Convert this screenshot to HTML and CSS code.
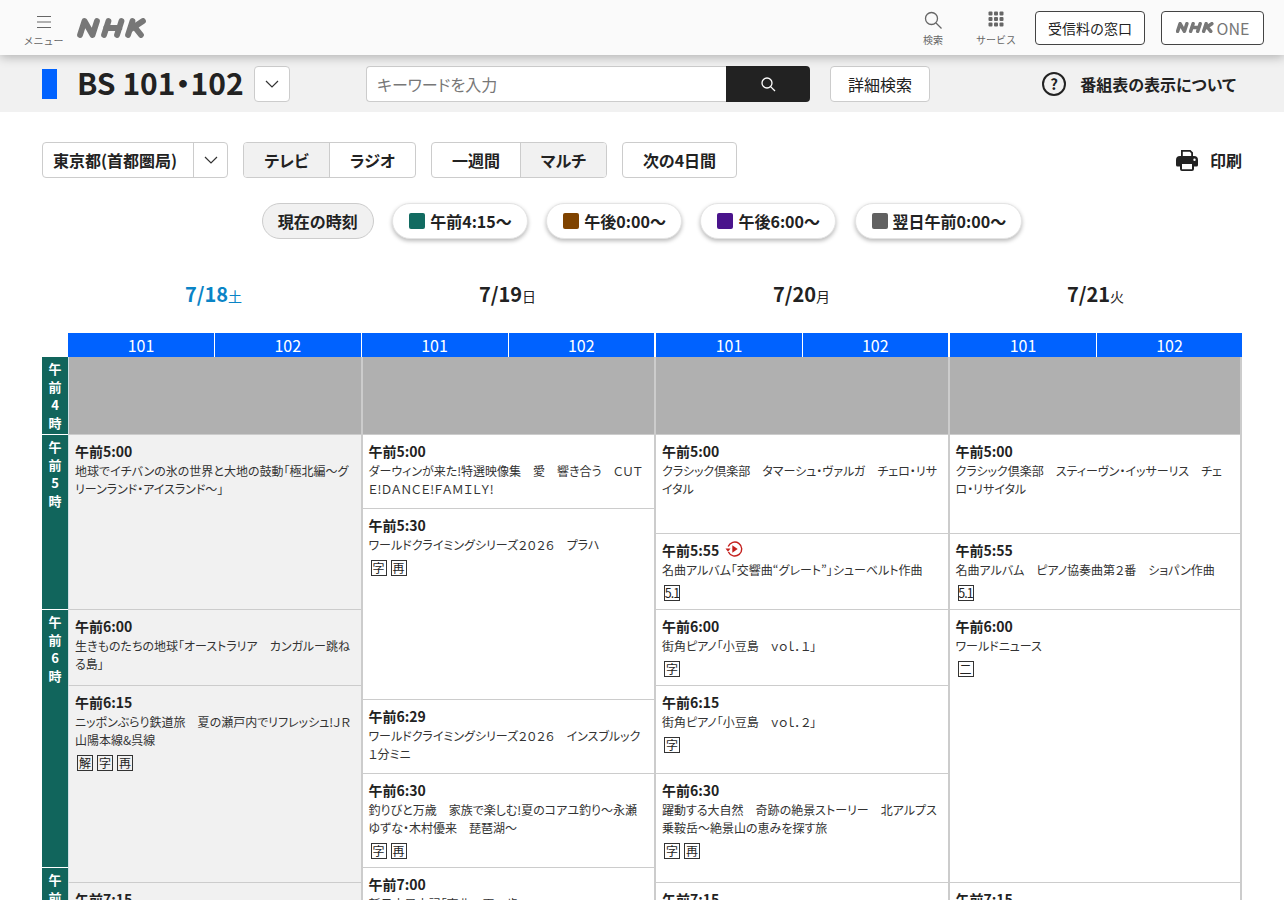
FILE: index.html
```html
<!DOCTYPE html>
<html lang="ja">
<head>
<meta charset="utf-8">
<title>番組表</title>
<link rel="stylesheet" href="styles.css">
</head>
<body>
<header class="top">
  <div class="menu">
    <svg class="menu-icon" viewBox="0 0 16 14" width="16" height="14"><path d="M1 1.5h14M1 7h14M1 12.5h14" stroke="#666" stroke-width="1.2" fill="none"/></svg>
    <span class="top-label">メニュー</span>
  </div>
  <svg class="logo" viewBox="0 0 70 20" width="70" height="20" role="img" aria-label="NHK">
    <path d="M3 17L7.5 3L15.5 17L20 3M27 17L31.500 3M40 17L44.500 3M29 10H42.500M51 17L55.500 3M66 3L54 11M58 9.500L64 17" fill="none" stroke="#777" stroke-width="5.800" stroke-linecap="round" stroke-linejoin="round"/>
  </svg>
  <div class="top-right">
    <div class="top-item item-search">
      <svg viewBox="0 0 20 20" width="20" height="20"><circle cx="8.500" cy="8.500" r="6" fill="none" stroke="#666" stroke-width="1.300"/><path d="M13 13l5.500 5.500" stroke="#666" stroke-width="1.300"/></svg>
      <span class="top-label">検索</span>
    </div>
    <div class="top-item item-service">
      <svg viewBox="0 0 16 16" width="16" height="16" fill="#666"><rect x="0.500" y="0.500" width="4" height="4" rx="1"/><rect x="6" y="0.500" width="4" height="4" rx="1"/><rect x="11.500" y="0.500" width="4" height="4" rx="1"/><rect x="0.500" y="6" width="4" height="4" rx="1"/><rect x="6" y="6" width="4" height="4" rx="1"/><rect x="11.500" y="6" width="4" height="4" rx="1"/><rect x="0.500" y="11.500" width="4" height="4" rx="1"/><rect x="6" y="11.500" width="4" height="4" rx="1"/><rect x="11.500" y="11.500" width="4" height="4" rx="1"/></svg>
      <span class="top-label">サービス</span>
    </div>
    <a class="top-btn btn-fee">受信料の窓口</a>
    <a class="top-btn btn-one">
      <svg viewBox="0 0 70 20" width="38" height="11" role="img" aria-label="NHK"><path d="M3 17L7.500 3L15.500 17L20 3M27 17L31.500 3M40 17L44.500 3M29 10H42.500M51 17L55.500 3M66 3L54 11M58 9.500L64 17" fill="none" stroke="#777" stroke-width="6.500" stroke-linecap="round" stroke-linejoin="round"/></svg>
      <span>ONE</span>
    </a>
  </div>
</header>

<section class="subbar">
  <span class="marker"></span>
  <h1 class="title">BS 101・102</h1>
  <button class="chev-btn"><svg class="chev" viewBox="0 0 14 8" width="14" height="8"><path d="M1 1l6 6 6-6"/></svg></button>
  <div class="search">
    <span class="search-input">キーワードを入力</span>
    <span class="search-go"><svg viewBox="0 0 16 16" width="16" height="16"><circle cx="7" cy="7" r="5" fill="none" stroke="#fff" stroke-width="1.300"/><path d="M10.600 10.600L15 15" stroke="#fff" stroke-width="1.300"/></svg></span>
  </div>
  <span class="adv">詳細検索</span>
  <div class="help">
    <svg viewBox="0 0 24 24" width="24" height="24"><circle cx="12" cy="12" r="11" fill="none" stroke="#222" stroke-width="2"/><text x="12" y="17.500" text-anchor="middle" class="help-q">?</text></svg>
    <span>番組表の表示について</span>
  </div>
</section>

<section class="controls">
  <div class="seg seg-region">
    <span class="region">東京都(首都圏局)</span>
    <span class="region-chev"><svg class="chev" viewBox="0 0 14 8" width="14" height="8"><path d="M1 1l6 6 6-6"/></svg></span>
  </div>
  <div class="seg seg-media">
    <span class="seg-item on">テレビ</span>
    <span class="seg-item">ラジオ</span>
  </div>
  <div class="seg seg-range">
    <span class="seg-item w88">一週間</span>
    <span class="seg-item on">マルチ</span>
  </div>
  <div class="seg seg-next"><span class="seg-item">次の4日間</span></div>
  <div class="print">
    <svg viewBox="0 0 22 21" width="22" height="21"><path fill="#222" d="M5 0h9.500L17 2.500V7H5zM6.800 1.800V7h8.400V3.300L13.800 1.800z"/><path fill="#222" fill-rule="evenodd" d="M4 6h14a4 4 0 0 1 4 4v5a1.500 1.500 0 0 1-1.500 1.500H18v2.500a2 2 0 0 1-2 2H6a2 2 0 0 1-2-2v-2.500H1.500A1.500 1.500 0 0 1 0 15v-5a4 4 0 0 1 4-4zm2 8v5.200h10V14zm12.500-5.500a1.200 1.200 0 1 0 0 2.400 1.200 1.200 0 0 0 0-2.400z"/></svg>
    <span>印刷</span>
  </div>
</section>

<nav class="pills">
  <span class="pill now">現在の時刻</span>
  <span class="pill"><i class="sw teal"></i>午前4:15〜</span>
  <span class="pill"><i class="sw brown"></i>午後0:00〜</span>
  <span class="pill"><i class="sw purple"></i>午後6:00〜</span>
  <span class="pill"><i class="sw grey"></i>翌日午前0:00〜</span>
</nav>

<div class="dates">
  <div class="date today">7/18<small>土</small></div>
  <div class="date">7/19<small>日</small></div>
  <div class="date">7/20<small>月</small></div>
  <div class="date">7/21<small>火</small></div>
</div>

<main class="grid">
  <div class="chs d1"><span>101</span><span>102</span></div>
  <div class="chs d2"><span>101</span><span>102</span></div>
  <div class="chs d3"><span>101</span><span>102</span></div>
  <div class="chs d4 last"><span>101</span><span>102</span></div>

  <div class="hour h4">午<br>前<br>4<br>時</div>
  <div class="hour h5">午<br>前<br>5<br>時</div>
  <div class="hour h6">午<br>前<br>6<br>時</div>
  <div class="hour h7">午<br>前<br>7<br>時</div>

  <div class="none d1 f400 t500"></div>
  <div class="none d2 f400 t500"></div>
  <div class="none d3 f400 t500"></div>
  <div class="none d4 f400 t500"></div>

  <article class="prog past d1 f500 t600">
    <div class="time">午前5:00</div>
    <p>地球でイチバンの氷の世界と大地の鼓動「極北編〜グリーンランド・アイスランド〜」</p>
  </article>
  <article class="prog past d1 f600 t615">
    <div class="time">午前6:00</div>
    <p>生きものたちの地球「オーストラリア　カンガルー跳ねる島」</p>
  </article>
  <article class="prog past d1 f615 t715">
    <div class="time">午前6:15</div>
    <p>ニッポンぶらり鉄道旅　夏の瀬戸内でリフレッシュ!ＪＲ山陽本線&amp;呉線</p>
    <div class="marks"><b>解</b><b>字</b><b>再</b></div>
  </article>
  <article class="prog past d1 f715 tend">
    <div class="time">午前7:15</div>
  </article>

  <article class="prog d2 f500 t530">
    <div class="time">午前5:00</div>
    <p>ダーウィンが来た!特選映像集　愛　響き合う　ＣＵＴＥ!ＤＡＮＣＥ!ＦＡＭＩＬＹ!</p>
  </article>
  <article class="prog d2 f530 t629">
    <div class="time">午前5:30</div>
    <p>ワールドクライミングシリーズ２０２６　プラハ</p>
    <div class="marks"><b>字</b><b>再</b></div>
  </article>
  <article class="prog d2 f629 t630">
    <div class="time">午前6:29</div>
    <p>ワールドクライミングシリーズ２０２６　インスブルック　１分ミニ</p>
  </article>
  <article class="prog d2 f630 t700">
    <div class="time">午前6:30</div>
    <p>釣りびと万歳　家族で楽しむ!夏のコアユ釣り〜永瀬ゆずな・木村優来　琵琶湖〜</p>
    <div class="marks"><b>字</b><b>再</b></div>
  </article>
  <article class="prog d2 f700 tend">
    <div class="time">午前7:00</div>
    <p>新日本風土記「東北　再一歩」</p>
  </article>

  <article class="prog d3 f500 t555">
    <div class="time">午前5:00</div>
    <p>クラシック倶楽部　タマーシュ・ヴァルガ　チェロ・リサイタル</p>
  </article>
  <article class="prog d3 f555 t600">
    <div class="time">午前5:55
      <svg class="replay" viewBox="0 0 18 18" width="18" height="18"><path d="M3.200 6.500A7 7 0 1 1 3.400 12" fill="none" stroke="#c4201d" stroke-width="1.400"/><path d="M0.500 8.500h5L3 11.800z" fill="#c4201d"/><path d="M7.300 5.300l5.400 3.700-5.400 3.700z" fill="#c4201d"/></svg>
    </div>
    <p>名曲アルバム「交響曲“グレート”」シューベルト作曲</p>
    <div class="marks"><b class="tight">5.1</b></div>
  </article>
  <article class="prog d3 f600 t615">
    <div class="time">午前6:00</div>
    <p>街角ピアノ「小豆島　ｖｏｌ．１」</p>
    <div class="marks"><b>字</b></div>
  </article>
  <article class="prog d3 f615 t630">
    <div class="time">午前6:15</div>
    <p>街角ピアノ「小豆島　ｖｏｌ．２」</p>
    <div class="marks"><b>字</b></div>
  </article>
  <article class="prog d3 f630 t715">
    <div class="time">午前6:30</div>
    <p>躍動する大自然　奇跡の絶景ストーリー　北アルプス乗鞍岳〜絶景山の恵みを探す旅</p>
    <div class="marks"><b>字</b><b>再</b></div>
  </article>
  <article class="prog d3 f715 tend">
    <div class="time">午前7:15</div>
  </article>

  <article class="prog d4 f500 t555">
    <div class="time">午前5:00</div>
    <p>クラシック倶楽部　スティーヴン・イッサーリス　チェロ・リサイタル</p>
  </article>
  <article class="prog d4 f555 t600">
    <div class="time">午前5:55</div>
    <p>名曲アルバム　ピアノ協奏曲第２番　ショパン作曲</p>
    <div class="marks"><b class="tight">5.1</b></div>
  </article>
  <article class="prog d4 f600 t715">
    <div class="time">午前6:00</div>
    <p>ワールドニュース</p>
    <div class="marks"><b>二</b></div>
  </article>
  <article class="prog d4 f715 tend">
    <div class="time">午前7:15</div>
  </article>
</main>
</body>
</html>
```

FILE: styles.css
```css
* { box-sizing: border-box; }
html, body { margin: 0; padding: 0; height: 900px; overflow: hidden; }
body {
  font-family: "Noto Sans CJK JP", "Noto Sans", sans-serif;
  font-feature-settings: "palt";
  color: #222;
  background: #fff;
}

/* top bar */
.top {
  position: relative;
  z-index: 2;
  height: 55px;
  display: flex;
  align-items: center;
  padding: 0 20px 0 24px;
  background: #fafafa;
  box-shadow: 0 2px 10px rgba(0, 0, 0, .28);
}
.menu, .top-item {
  display: flex;
  flex-direction: column;
  align-items: center;
  color: #666;
}
.menu { width: 39px; padding-top: 6px; }
.menu-icon { margin-bottom: 5px; }
.top-label { font-size: 10px; line-height: 13px; white-space: nowrap; }
.menu .top-label, .item-service .top-label { font-feature-settings: normal; }
.logo { margin-left: 14px; }
.top-right { margin-left: auto; display: flex; align-items: center; }
.item-search { width: 20px; }
.item-search svg { margin-bottom: 3px; }
.item-service { width: 40px; margin-left: 33px; margin-right: 19px; padding-top: 1px; }
.item-service svg { margin-bottom: 6px; }
.top-btn {
  height: 34px;
  display: flex;
  align-items: center;
  justify-content: center;
  border: 1px solid #444;
  border-radius: 4px;
  background: #fff;
  font-size: 14px;
  font-feature-settings: normal;
}
.btn-fee { width: 110px; }
.btn-one { width: 103px; margin-left: 16px; gap: 3px; color: #777; font-size: 16px; }

/* sub bar */
.subbar {
  height: 57px;
  display: flex;
  align-items: center;
  padding: 0 48px 0 42px;
  background: #f1f1f1;
}
.marker { width: 15px; height: 30px; background: #0062ff; }
.title { margin: 0 0 4px 20px; font-size: 30px; font-weight: 700; line-height: 36px; white-space: nowrap; width: 167px; }
.chev-btn {
  width: 36px;
  height: 36px;
  margin-left: 10px;
  padding: 0;
  display: flex;
  align-items: center;
  justify-content: center;
  background: #fff;
  border: 1px solid #ccc;
  border-radius: 4px;
}
.chev { fill: none; stroke: #333; stroke-width: 1.200; }
.search { display: flex; margin-left: 76px; height: 36px; }
.search-input {
  width: 360px;
  padding-left: 10px;
  display: flex;
  align-items: center;
  background: #fff;
  border: 1px solid #ccc;
  border-right: 0;
  border-radius: 4px 0 0 4px;
  color: #777;
  font-size: 16px;
}
.search-go {
  width: 84px;
  display: flex;
  align-items: center;
  justify-content: center;
  background: #222;
  border-radius: 0 4px 4px 0;
}
.adv {
  width: 100px;
  height: 36px;
  margin-left: 20px;
  display: flex;
  align-items: center;
  justify-content: center;
  background: #fff;
  border: 1px solid #ccc;
  border-radius: 4px;
  font-size: 16px;
}
.help { margin-left: auto; display: flex; align-items: center; gap: 14px; font-size: 16px; font-weight: 700; }
.help-q { font-size: 15px; font-weight: 700; fill: #222; }

/* controls */
.controls {
  display: flex;
  align-items: center;
  height: 36px;
  margin: 30px 42px 0;
}
.seg {
  display: flex;
  height: 36px;
  border: 1px solid #ccc;
  border-radius: 4px;
  overflow: hidden;
  font-size: 16px;
  font-weight: 700;
}
.seg-region { width: 186px; }
.region { width: 151px; padding-left: 10px; display: flex; align-items: center; border-right: 1px solid #ccc; white-space: nowrap; }
.region-chev { flex: 1; display: flex; align-items: center; justify-content: center; }
.seg-media { width: 173px; margin-left: 15px; }
.seg-range { width: 176px; margin-left: 15px; }
.seg-next { width: 115px; margin-left: 15px; }
.seg-item { flex: 1; display: flex; align-items: center; justify-content: center; }
.seg-item + .seg-item { border-left: 1px solid #ccc; }
.seg-item.w88 { flex: 0 0 88px; }
.seg-item.on { background: #f1f1f1; }
.seg-media .seg-item:first-child { flex: 0 0 85px; }
.print { margin-left: auto; display: flex; align-items: center; gap: 12px; font-size: 16px; font-weight: 700; }

/* pills */
.pills {
  display: flex;
  justify-content: center;
  gap: 18.600px;
  margin-top: 25px;
}
.pill {
  height: 36px;
  padding: 0 15px 0 16px;
  display: flex;
  align-items: center;
  gap: 5px;
  border-radius: 18px;
  background: #fff;
  border: 1px solid #e4e4e4;
  box-shadow: 0 2px 4px rgba(0, 0, 0, .28);
  font-size: 16px;
  font-weight: 700;
  white-space: nowrap;
}
.pill.now { background: #f1f1f1; border-color: #ccc; box-shadow: none; padding: 0 15px; }
.sw { width: 16px; height: 16px; border-radius: 2px; display: block; }
.teal { background: #126b61; }
.brown { background: #7f4300; }
.purple { background: #4a148c; }
.grey { background: #616161; }

/* dates */
.dates {
  display: grid;
  grid-template-columns: repeat(4, 294px);
  margin: 40px 0 0 66.500px;
}
.date { text-align: center; font-size: 20px; font-weight: 700; line-height: 30px; height: 30px; }
.date small { font-size: 14px; font-weight: 400; }
.today { color: #0a84c6; }

/* schedule grid */
.grid {
  display: grid;
  margin: 24px 42px 0;
  grid-template-columns: [time] 26px [d1] 1fr [d2] 1fr [d3] 1fr [d4] 1fr [dend];
  grid-template-rows:
    [head] 24px
    [r400] 77px [r500] 74px [r530] 25px [r555] 76px [r600] 76px
    [r615] 14px [r629] 74px [r630] 94px [r700] 15px [r715] 100px [rend];
}
.d1 { grid-column: d1 / d2; z-index: 3; }
.d2 { grid-column: d2 / d3; z-index: 2; }
.d3 { grid-column: d3 / d4; z-index: 1; }
.d4 { grid-column: d4 / dend; }
.f400 { grid-row-start: r400; }
.f500 { grid-row-start: r500; }
.f530 { grid-row-start: r530; }
.f555 { grid-row-start: r555; }
.f600 { grid-row-start: r600; }
.f615 { grid-row-start: r615; }
.f629 { grid-row-start: r629; }
.f630 { grid-row-start: r630; }
.f700 { grid-row-start: r700; }
.f715 { grid-row-start: r715; }
.t500 { grid-row-end: r500; }
.t530 { grid-row-end: r530; }
.t555 { grid-row-end: r555; }
.t600 { grid-row-end: r600; }
.t615 { grid-row-end: r615; }
.t629 { grid-row-end: r629; }
.t630 { grid-row-end: r630; }
.t700 { grid-row-end: r700; }
.t715 { grid-row-end: r715; }
.tend { grid-row-end: rend; }

.chs {
  grid-row: head;
  display: grid;
  grid-template-columns: 146px 1fr;
  background: #0062ff;
  color: #fff;
  font-size: 16px;
  line-height: 25px;
  text-align: center;
  border-right: 1px solid #fff;
}
.chs.d3 { margin-left: 1px; }
.chs.d4 { margin-left: 1.500px; }
.chs.last { border-right: 0; }
.chs span + span { border-left: 1px solid #fff; }

.hour {
  grid-column: time;
  background: #11655c;
  color: #fff;
  font-size: 13px;
  font-weight: 700;
  line-height: 18px;
  text-align: center;
  padding-top: 3px;
}
.hour:not(.h4) { border-top: 1px solid #fff; }
.h4 { grid-row: r400 / r500; }
.h5 { grid-row: r500 / r600; }
.h6 { grid-row: r600 / r700; }
.h7 { grid-row: r700 / rend; }

.none {
  background: #b0b0b0;
  border-right: 2px solid #ccc;
}
.prog {
  padding: 6px 6px 0 7px;
  border-right: 2px solid #ccc;
  border-top: 1px solid #ccc;
  background: #fff;
  min-height: 0;
  overflow: hidden;
}
.prog.d1, .prog.d2, .prog.d3, .none.d1, .none.d2, .none.d3 { margin-right: -1px; }
.prog.past { background: #f1f1f1; }
.d1.prog, .d1.none { border-left: 1px solid #cfdfe4; padding-left: 6px; }
.time {
  display: flex;
  align-items: center;
  gap: 6px;
  font-size: 14px;
  font-weight: 700;
  line-height: 20px;
}
.replay { margin-top: -3px; }
.prog p {
  margin: 1px 0 0;
  font-size: 12px;
  line-height: 18px;
  color: #333;
}
.marks { display: flex; gap: 4px; margin: 6px 0 0 2px; }
.marks b {
  width: 16px;
  height: 16px;
  display: flex;
  align-items: center;
  justify-content: center;
  border: 1px solid #333;
  font-size: 12px;
  font-weight: 400;
  line-height: 1;
  color: #222;
}
.marks b.tight { letter-spacing: -1px; font-size: 12.500px; }
```
